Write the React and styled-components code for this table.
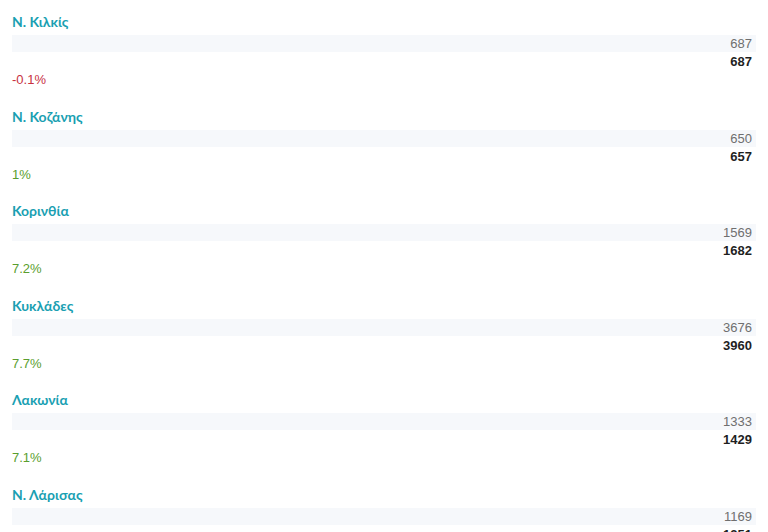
import React from 'react';
import styled, { createGlobalStyle } from 'styled-components';

const regions = [
  { name: 'Ν. Κιλκίς', before: 687, after: 687, change: '-0.1%' },
  { name: 'Ν. Κοζάνης', before: 650, after: 657, change: '1%' },
  { name: 'Κορινθία', before: 1569, after: 1682, change: '7.2%' },
  { name: 'Κυκλάδες', before: 3676, after: 3960, change: '7.7%' },
  { name: 'Λακωνία', before: 1333, after: 1429, change: '7.1%' },
  { name: 'Ν. Λάρισας', before: 1169, after: 1251, change: '7%' },
];

const App = () => (
  <>
    <GlobalStyle />
    <List>
      {regions.map((r) => (
        <Item key={r.name}>
          <Title>{r.name}</Title>
          <Bar>
            <Previous>{r.before}</Previous>
          </Bar>
          <Current>{r.after}</Current>
          <Change negative={r.change.startsWith('-')}>{r.change}</Change>
        </Item>
      ))}
    </List>
  </>
);

export default App;

const GlobalStyle = createGlobalStyle`
  body {
    margin: 0;
    background: #fff;
    font-family: 'Liberation Sans', Arial, sans-serif;
  }
`;

const List = styled.div`
  padding: 12px 12px 0 12px;
`;

const Item = styled.div`
  display: flex;
  flex-direction: column;
  margin-bottom: 17.6px;
`;

const Title = styled.div`
  font-family: Lato, 'Open Sans', sans-serif;
  font-weight: 700;
  font-size: 14px;
  line-height: 20px;
  color: #1a9fb2;
  margin-bottom: 3px;
`;

const Bar = styled.div`
  height: 17px;
  background: #f6f8fb;
  display: flex;
  align-items: center;
  justify-content: flex-end;
  padding-right: 4px;
`;

const Previous = styled.span`
  font-size: 13px;
  color: #6f6f6f;
`;

const Current = styled.div`
  font-size: 13px;
  font-weight: 700;
  line-height: 19px;
  color: #1f1f1f;
  text-align: right;
  padding-right: 4px;
`;

const Change = styled.div`
  font-size: 13px;
  line-height: 18px;
  color: ${({ negative }) => (negative ? '#c8313f' : '#5a9e2e')};
`;
